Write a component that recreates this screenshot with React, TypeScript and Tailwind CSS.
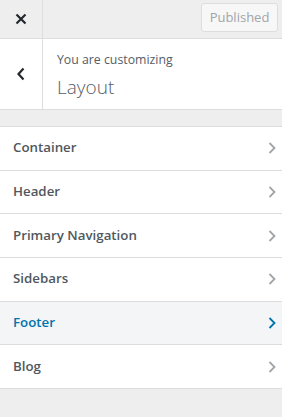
import React from "react";

const Chevron = ({ color }: { color: string }) => (
  <svg width="8" height="12" viewBox="0 0 8 12" fill="none">
    <path d="M1.5 1l5 5-5 5" stroke={color} strokeWidth="1.8" />
  </svg>
);

const items = ["Container", "Header", "Primary Navigation", "Sidebars", "Footer", "Blog"];

export default function App() {
  return (
    <div
      className="w-[282px] h-[417px] bg-[#eeeeee] overflow-hidden"
      style={{ fontFamily: '"Open Sans", "Noto Sans", sans-serif' }}
    >
      <div className="flex h-[39px] border-b border-[#dddddd] bg-[#eeeeee]">
        <div className="w-[43px] border-r border-[#dddddd] flex items-center justify-center">
          <svg width="12" height="12" viewBox="0 0 12 12">
            <path d="M1.5 1.5l9 9M10.5 1.5l-9 9" stroke="#23282d" strokeWidth="2.2" />
          </svg>
        </div>
        <div className="flex-1 flex items-start justify-end pr-[4px] pt-[3px]">
          <div className="h-[29px] w-[77px] border border-[#dddddd] rounded-[3px] bg-[#f7f7f7] text-[#a0a5aa] text-[13px] flex items-center justify-center">
            Published
          </div>
        </div>
      </div>
      <div className="flex h-[71px] border-b border-[#dddddd] bg-white">
        <div className="w-[43px] border-r border-[#dddddd] flex items-center justify-center">
          <svg width="10" height="14" viewBox="0 0 10 14">
            <path d="M7.5 1.5L2.5 7l5 5.5" stroke="#23282d" strokeWidth="2.2" fill="none" />
          </svg>
        </div>
        <div className="flex-1 pl-[14px] pt-[12px]">
          <div className="text-[12.3px] leading-[18px] text-[#555d66]">You are customizing</div>
          <div className="text-[19px] leading-[28px] mt-[4px] font-light text-[#555d66]">Layout</div>
        </div>
      </div>
      <div className="h-[16px]" />
      <div className="border-t border-[#dddddd]">
        {items.map((it) => {
          const active = it === "Footer";
          return (
            <div
              key={it}
              className={`flex items-center justify-between h-[43.67px] border-b border-[#dddddd] pl-[13px] pr-[6px] ${
                active ? "bg-[#f3f5f6] text-[#0073aa]" : "bg-white text-[#50575e]"
              }`}
            >
              <span className="text-[13.3px] font-semibold">{it}</span>
              <Chevron color={active ? "#0073aa" : "#a0a5aa"} />
            </div>
          );
        })}
      </div>
    </div>
  );
}
